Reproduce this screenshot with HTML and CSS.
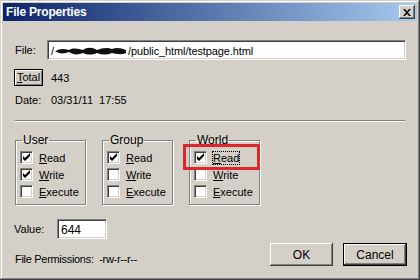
FILE: index.html
```html
<!DOCTYPE html>
<html lang="en">
<head>
  <meta charset="UTF-8">
  <title>File Properties</title>
  <link rel="stylesheet" href="styles.css">
</head>
<body>
  <div class="window">
    <div class="titlebar">
      <span class="title">File Properties</span>
      <span class="close-btn">
        <svg width="8" height="7" viewBox="0 0 8 7"><path d="M0 0h2l2 2.3L6 0h2L5 3.5 8 7H6L4 4.7 2 7H0l3-3.5z" fill="#000"/></svg>
      </span>
    </div>

    <div class="content">
      <div class="file-row">
        <span class="file-label">File:</span>
        <div class="field path-field">/<svg class="redact" width="74" height="9" viewBox="0 0 74 9"><path d="M1 5c4-4 9-3 14-2 5-3 10-1 14 0 4-3 9-3 14 0 5-2 10-3 15-1 5-2 9-1 14 1v3c-4 2-10 1-14 0-5 2-10 2-15 0-5 2-9 2-14 0-5 2-10 2-14-1-5 2-10 2-14-1z" fill="#111"/></svg>/public_html/testpage.html</div>
      </div>

      <div class="total-row">
        <span class="total-btn"><u>T</u>otal</span>
        <span>443</span>
      </div>

      <div class="date-row">
        <span class="date-label">Date:</span>
        <span>03/31/11&nbsp;&nbsp;17:55</span>
      </div>

      <div class="separator"></div>

      <div class="groups">
        <fieldset class="perm-group">
          <legend>User</legend>
          <div class="check-row"><span class="checkbox checked"></span><span><u>R</u>ead</span></div>
          <div class="check-row"><span class="checkbox checked"></span><span><u>W</u>rite</span></div>
          <div class="check-row"><span class="checkbox"></span><span><u>E</u>xecute</span></div>
        </fieldset>
        <fieldset class="perm-group">
          <legend>Group</legend>
          <div class="check-row"><span class="checkbox checked"></span><span><u>R</u>ead</span></div>
          <div class="check-row"><span class="checkbox"></span><span><u>W</u>rite</span></div>
          <div class="check-row"><span class="checkbox"></span><span><u>E</u>xecute</span></div>
        </fieldset>
        <fieldset class="perm-group world">
          <legend>World</legend>
          <div class="highlight"></div>
          <div class="check-row"><span class="checkbox checked"></span><span class="focused"><u>R</u>ead</span></div>
          <div class="check-row"><span class="checkbox"></span><span><u>W</u>rite</span></div>
          <div class="check-row"><span class="checkbox"></span><span><u>E</u>xecute</span></div>
        </fieldset>
      </div>

      <div class="value-row">
        <span class="value-label">Value:</span>
        <div class="field value-field">644</div>
      </div>

      <div class="footer">
        <span class="perms">File Permissions:&nbsp; -rw-r--r--</span>
        <div class="buttons">
          <button class="btn">OK</button>
          <button class="btn default">Cancel</button>
        </div>
      </div>
    </div>
  </div>
</body>
</html>
```

FILE: styles.css
```css
* {
  box-sizing: border-box;
}
body {
  margin: 0;
  background: #d4d0c8;
  font-family: "Liberation Sans", Arial, sans-serif;
  font-size: 11px;
  color: #000;
}
.window {
  width: 420px;
  height: 280px;
  padding: 3px;
  background: #d4d0c8;
  box-shadow: inset -1px -1px #404040, inset 1px 1px #d4d0c8,
              inset -2px -2px #808080, inset 2px 2px #fff;
}
.titlebar {
  height: 18px;
  display: flex;
  align-items: center;
  justify-content: space-between;
  padding: 0 2px 0 3px;
  background: linear-gradient(to right, #0a246a, #a6caf0);
}
.title {
  color: #fff;
  font-weight: bold;
  font-size: 12px;
  letter-spacing: -0.2px;
}
.close-btn {
  width: 16px;
  height: 14px;
  display: flex;
  align-items: center;
  justify-content: center;
  background: #d4d0c8;
  box-shadow: inset -1px -1px #404040, inset 1px 1px #fff,
              inset -2px -2px #808080;
}
.content {
  padding: 19px 11px 0 11px;
}
.field {
  height: 20px;
  line-height: 16px;
  padding: 2px 3px;
  background: #fff;
  border: 1px solid;
  border-color: #808080 #fff #fff #808080;
  box-shadow: inset 1px 1px #404040, inset -1px -1px #d4d0c8;
  white-space: nowrap;
  overflow: hidden;
}
.file-row {
  display: flex;
  align-items: center;
}
.file-label {
  width: 33px;
  padding-left: 1px;
}
.path-field {
  width: 359px;
  letter-spacing: -0.1px;
}
.redact {
  vertical-align: -1px;
}
.total-row {
  display: flex;
  align-items: center;
  margin-top: 9px;
  height: 17px;
}
.total-btn {
  width: 29px;
  height: 17px;
  line-height: 15px;
  text-align: center;
  margin-right: 8px;
  border: 1px solid #000;
  box-shadow: inset 1px 1px #fff, inset -1px -1px #808080;
}
.date-row {
  display: flex;
  margin-top: 7px;
  line-height: 14px;
}
.date-label {
  width: 37px;
  padding-left: 1px;
}
.separator {
  margin: 13px 1px 0 1px;
  height: 2px;
  border-top: 1px solid #808080;
  border-bottom: 1px solid #fff;
}
.groups {
  display: flex;
  gap: 16px;
  margin-top: 12px;
  padding-left: 1px;
}
.perm-group {
  position: relative;
  width: 71px;
  min-width: 0;
  height: 71px;
  margin: 0;
  padding: 2px 4px 4px 4px;
  border: 1px solid #808080;
  box-shadow: 1px 1px 0 #fff, inset 1px 1px 0 #fff;
}
.perm-group legend {
  margin-left: 2px;
  padding: 0 1px;
  line-height: 13px;
  font-size: 12px;
}
.check-row {
  display: flex;
  align-items: center;
  gap: 6px;
  height: 17px;
  white-space: nowrap;
}
.checkbox {
  width: 13px;
  height: 13px;
  flex: none;
  background: #fff;
  border: 1px solid;
  border-color: #808080 #fff #fff #808080;
  box-shadow: inset 1px 1px #404040, inset -1px -1px #d4d0c8;
}
.checkbox.checked {
  background: #fff url("data:image/svg+xml,%3Csvg xmlns='http://www.w3.org/2000/svg' width='11' height='11'%3E%3Cpath d='M2 4v3l2 2 5-5V1L4 6z' fill='%23000'/%3E%3C/svg%3E") no-repeat center;
}
.focused {
  outline: 1px dotted #000;
  outline-offset: 0;
}
.highlight {
  position: absolute;
  left: -7px;
  top: -3px;
  width: 77px;
  height: 26px;
  border: 3px solid #e0242c;
}
.value-row {
  display: flex;
  align-items: center;
  margin-top: 14px;
}
.value-label {
  width: 43px;
}
.value-field {
  width: 50px;
  font-size: 12px;
}
.footer {
  display: flex;
  justify-content: space-between;
  margin-top: 4px;
  height: 23px;
}
.perms {
  align-self: flex-end;
  line-height: 14px;
  padding-left: 1px;
  letter-spacing: -0.3px;
}
.buttons {
  display: flex;
  gap: 10px;
  margin-right: -1px;
}
.btn {
  width: 63px;
  height: 23px;
  padding: 0;
  font-family: "Liberation Sans", Arial, sans-serif;
  font-size: 12px;
  color: #000;
  background: #d4d0c8;
  border: none;
  box-shadow: inset -1px -1px #404040, inset 1px 1px #fff,
              inset -2px -2px #808080;
}
.btn.default {
  width: 64px;
  border: 1px solid #000;
}
```
